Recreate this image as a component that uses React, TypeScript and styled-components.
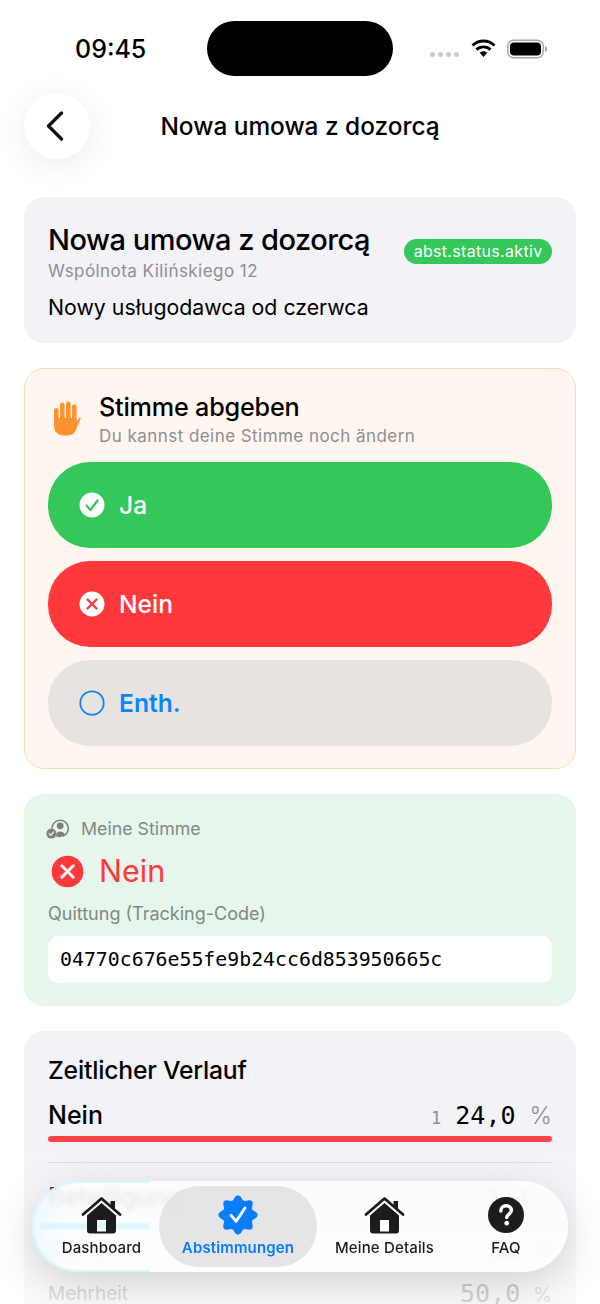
import styled, { createGlobalStyle } from 'styled-components';

const GlobalStyle = createGlobalStyle`
  html, body {
    margin: 0;
    padding: 0;
    background: #fff;
  }
  body {
    font-family: Inter, "Noto Sans", sans-serif;
    color: #000;
  }
  * {
    box-sizing: border-box;
  }
`;

const Screen = styled.div`
  position: relative;
  width: 600px;
  height: 1304px;
  overflow: hidden;
  background: #fff;
`;

const StatusBar = styled.div`
  height: 93px;
  padding: 21px 0 0 75px;
  display: flex;
  align-items: flex-start;
`;

const Clock = styled.div`
  flex: none;
  width: 132px;
  padding-top: 13px;
  font-size: 25px;
  line-height: 30px;
  font-weight: 500;
`;

const Island = styled.div`
  flex: none;
  width: 186px;
  height: 55px;
  border-radius: 28px;
  background: #000;
`;

const StatusIcons = styled.div`
  flex: none;
  margin-left: 37px;
  padding-top: 18px;
  display: flex;
  align-items: center;
  gap: 10px;
`;

const Dots = styled.div`
  display: flex;
  gap: 3px;
  margin-top: 11px;
  margin-right: 1px;
`;

const Dot = styled.span`
  width: 5px;
  height: 5px;
  border-radius: 50%;
  background: #ccc;
`;

const Nav = styled.div`
  position: relative;
  height: 104px;
  padding: 0 24px;
  display: flex;
  align-items: flex-start;
`;

const BackButton = styled.div`
  flex: none;
  width: 66px;
  height: 66px;
  padding-right: 5px;
  border-radius: 50%;
  background: #fff;
  display: flex;
  align-items: center;
  justify-content: center;
  box-shadow: 0 6px 34px rgba(0, 0, 0, 0.08);
`;

const NavTitle = styled.div`
  flex: 1;
  margin-left: -66px;
  text-align: center;
  font-size: 24.4px;
  line-height: 66px;
  font-weight: 500;
  white-space: nowrap;
`;

const Content = styled.div`
  padding: 0 24px;
  display: flex;
  flex-direction: column;
  gap: 25px;
`;

const Card = styled.section<{ $tone?: 'gray' | 'green' }>`
  border-radius: 20px;
  background: ${(props) => (props.$tone === 'green' ? '#e6f6ea' : '#f2f2f7')};
  padding: 24px;
`;

const SummaryCard = styled(Card)`
  height: 146px;
  padding-top: 25px;
`;

const SummaryTop = styled.div`
  display: flex;
  justify-content: space-between;
  align-items: flex-start;
`;

const BigTitle = styled.h1`
  margin: 0;
  font-size: 29px;
  line-height: 35px;
  font-weight: 550;
  letter-spacing: -0.5px;
  white-space: nowrap;
`;

const Sub = styled.div<{ $gap?: number }>`
  margin-top: ${(props) => props.$gap ?? 0}px;
  font-size: 17px;
  line-height: 20px;
  color: #8e8e93;
  letter-spacing: 0.45px;
  white-space: nowrap;
`;

const Description = styled.div`
  margin-top: 13px;
  font-size: 21.3px;
  line-height: 26px;
`;

const StatusBadge = styled.span`
  margin-top: 17px;
  height: 25px;
  padding: 0 9.500px;
  border-radius: 13px;
  background: #34c759;
  color: #fff;
  font-size: 16px;
  line-height: 25px;
  letter-spacing: 0.32px;
  white-space: nowrap;
`;

const VoteCard = styled.section`
  height: 401px;
  border-radius: 20px;
  border: 1.5px solid #fcd9b6;
  background: #fff6ef;
  padding: 23px 23px 0;
`;

const VoteHeader = styled.div`
  display: flex;
  align-items: center;
  gap: 18px;
  height: 53px;
  margin-bottom: 17px;
  padding-left: 5px;
`;

const VoteHeading = styled.div`
  font-size: 25.2px;
  line-height: 30px;
  font-weight: 550;
  letter-spacing: -0.2px;
`;

const VoteChoices = styled.div`
  display: flex;
  flex-direction: column;
  gap: 13px;
`;

const ChoiceButton = styled.div<{ $kind: 'yes' | 'no' | 'abstain' }>`
  height: 86px;
  border-radius: 42px;
  padding-left: 31px;
  display: flex;
  align-items: center;
  gap: 14px;
  font-size: 24.6px;
  font-weight: ${(props) => (props.$kind === 'abstain' ? 600 : 550)};
  background: ${(props) =>
    props.$kind === 'yes' ? '#34c759' : props.$kind === 'no' ? '#ff383c' : '#e7e3df'};
  color: ${(props) => (props.$kind === 'abstain' ? '#0a84ff' : '#fff')};
`;

const ReceiptCard = styled(Card)`
  height: 212px;
  padding-top: 23px;
`;

const MyVoteLabel = styled.div`
  display: flex;
  align-items: center;
  gap: 11px;
  margin-left: -2px;
  font-size: 17.8px;
  line-height: 24px;
  color: #7f8a84;
`;

const MyVote = styled.div`
  display: flex;
  align-items: center;
  gap: 15px;
  margin-top: 8px;
  padding-left: 3px;
  font-size: 30.5px;
  line-height: 44px;
  color: #ff383c;
`;

const ReceiptLabel = styled.div`
  margin-top: 9px;
  font-size: 18px;
  line-height: 24px;
  color: #7f8a84;
`;

const CodeBox = styled.div`
  margin-top: 10px;
  height: 47px;
  padding-left: 12px;
  border-radius: 10px;
  background: #fff;
  font-family: "DejaVu Sans Mono", "Liberation Mono", monospace;
  font-size: 19.85px;
  line-height: 47px;
`;

const TimelineCard = styled(Card)`
  height: 320px;
  padding-top: 22px;
`;

const TimelineTitle = styled.h2`
  margin: 0;
  font-size: 24.7px;
  line-height: 34px;
  font-weight: 550;
  letter-spacing: -0.2px;
`;

const ResultRow = styled.div<{ $gap?: number }>`
  display: flex;
  align-items: center;
  justify-content: space-between;
  margin-top: ${(props) => props.$gap ?? 0}px;
  height: 36px;
`;

const ResultName = styled.span<{ $small?: boolean }>`
  font-size: ${(props) => (props.$small ? 19 : 25)}px;
  font-weight: ${(props) => (props.$small ? 400 : 500)};
  color: ${(props) => (props.$small ? '#8e8e93' : '#000')};
`;

const Value = styled.span<{ $muted?: boolean }>`
  display: flex;
  align-items: baseline;
  font-family: "DejaVu Sans Mono", "Liberation Mono", monospace;
  font-size: 25px;
  color: ${(props) => (props.$muted ? '#6e6e73' : '#000')};
`;

const Count = styled.span`
  margin-right: 14px;
  font-size: 17px;
  color: #8e8e93;
`;

const Unit = styled.span<{ $small?: boolean }>`
  margin-left: ${(props) => (props.$small ? 13 : 14)}px;
  font-family: Inter, sans-serif;
  font-size: ${(props) => (props.$small ? 20 : 24)}px;
  font-weight: 300;
  color: #8e8e93;
`;

const Track = styled.div`
  height: 6px;
  margin-top: 3px;
  border-radius: 3px;
  background: #ff383c;
`;

const Divider = styled.div`
  height: 1px;
  margin-top: 20px;
  background: #d9d9de;
`;

const BottomFade = styled.div`
  position: absolute;
  left: 0;
  right: 0;
  bottom: 0;
  height: 180px;
  background: linear-gradient(rgba(255, 255, 255, 0), rgba(255, 255, 255, 0.72));
  pointer-events: none;
`;

const TabBar = styled.nav`
  position: absolute;
  left: 32px;
  top: 1181px;
  width: 536px;
  height: 91px;
  padding: 5px;
  border-radius: 46px;
  display: flex;
  overflow: hidden;
  background: rgba(253, 253, 254, 0.88);
  backdrop-filter: blur(2.5px);
  box-shadow: 0 12px 44px rgba(0, 0, 0, 0.16);
`;

/* refraction at the left end of the glass bar */
const GlassEdge = styled.div`
  position: absolute;
  left: 0;
  top: 0;
  width: 118px;
  height: 91px;
  border: 2px solid #d5f5ff;
  border-right: 0;
  border-radius: 46px 0 0 46px;
  background: linear-gradient(90deg, rgba(214, 246, 255, 0.45), rgba(255, 255, 255, 0) 25%);
`;

const GlassStreak = styled.div`
  position: absolute;
  left: 8px;
  top: 42px;
  width: 110px;
  height: 6px;
  background: #dbf6ff;
  filter: blur(1px);
`;

const TabItem = styled.div<{ $width: number; $inset?: number; $active?: boolean }>`
  position: relative;
  width: ${(props) => props.$width}px;
  height: 81px;
  flex: none;
  border-radius: 40px;
  padding: 10px 0 0 ${(props) => props.$inset ?? 0}px;
  display: flex;
  flex-direction: column;
  align-items: center;
  background: ${(props) => (props.$active ? 'rgba(225, 225, 228, 0.82)' : 'transparent')};
  color: ${(props) => (props.$active ? '#0a7dff' : '#1c1c1e')};
`;

const TabIcon = styled.div`
  height: 38px;
  display: flex;
  align-items: center;
  justify-content: center;
`;

const TabLabel = styled.span<{ $active?: boolean }>`
  margin-top: 4px;
  font-size: 15px;
  line-height: 20px;
  font-weight: ${(props) => (props.$active ? 600 : 500)};
  letter-spacing: 0.15px;
  white-space: nowrap;
`;

const Wifi = () => (
  <svg width="27" height="20" viewBox="0 0 27 20">
    <path
      fill="#000"
      d="M13.5 3.6c3.9 0 7.4 1.5 10 4l2-2.1C22.3 2.4 18.1.5 13.5.5S4.7 2.4 1.5 5.5l2 2.1c2.6-2.5 6.1-4 10-4z"
    />
    <path
      fill="#000"
      d="M13.5 9.3c2.3 0 4.4.9 6 2.4l2-2.1c-2.1-2-4.9-3.2-8-3.2s-5.9 1.2-8 3.2l2 2.1c1.6-1.5 3.7-2.4 6-2.4z"
    />
    <path fill="#000" d="M13.5 12.3c-1.5 0-2.8.6-3.8 1.5l3.8 4.3 3.8-4.3c-1-.9-2.3-1.5-3.800-1.500z" />
  </svg>
);

const Battery = () => (
  <svg width="41" height="20" viewBox="0 0 41 20">
    <rect x="0.75" y="1.25" width="35.5" height="17.5" rx="6" fill="none" stroke="#a8a8a8" strokeWidth="1.5" />
    <rect x="3" y="3.5" width="31" height="13" rx="4" fill="#000" />
    <path d="M38 7v6c1.3-.4 2.2-1.7 2.2-3S39.3 7.4 38 7z" fill="#a8a8a8" />
  </svg>
);

const Chevron = () => (
  <svg width="20" height="30" viewBox="0 0 20 30">
    <path d="M16.5 2 L3.5 15 L16.5 28" fill="none" stroke="#111" strokeWidth="3.3" strokeLinecap="round" strokeLinejoin="round" />
  </svg>
);

const RaisedHand = () => (
  <svg width="28" height="35" viewBox="0 0 28 35">
    <g fill="#ff9230">
      <rect x="1" y="7" width="4.6" height="18" rx="2.3" />
      <rect x="7" y="1.5" width="4.6" height="20" rx="2.3" />
      <rect x="13" y="0.5" width="4.6" height="20" rx="2.3" />
      <rect x="19" y="3.5" width="4.6" height="18" rx="2.3" />
      <path d="M1 17h22.6v4l2.1-3.6c.7-1.1 2-1.4 2-.4 0 .4-.1.8-.3 1.2l-4.2 10.1C21.7 32.6 18.9 34.5 14.5 34.5H11C5 34.5 1 30.5 1 25z" />
    </g>
  </svg>
);

const CheckDisc = () => (
  <svg width="26" height="26" viewBox="0 0 26 26">
    <circle cx="13" cy="13" r="12.5" fill="#fff" />
    <path d="M7.5 13.5 L11.5 18 L18.5 8.5" fill="none" stroke="#34c759" strokeWidth="2.2" strokeLinecap="round" strokeLinejoin="round" />
  </svg>
);

const CrossDisc = ({ size, bg, fg }: { size: number; bg: string; fg: string }) => (
  <svg width={size} height={size} viewBox="0 0 26 26">
    <circle cx="13" cy="13" r="12.5" fill={bg} />
    <path d="M8.5 8.5 L17.5 17.5 M17.5 8.5 L8.5 17.5" fill="none" stroke={fg} strokeWidth="2.4" strokeLinecap="round" />
  </svg>
);

const EmptyDisc = () => (
  <svg width="26" height="26" viewBox="0 0 26 26">
    <circle cx="13" cy="13" r="11.7" fill="none" stroke="#0a84ff" strokeWidth="1.8" />
  </svg>
);

const PersonCheck = () => (
  <svg width="24" height="20" viewBox="0 0 24 20">
    <g fill="#7a827d">
      <path d="M14 0.5a9 9 0 0 1 3 17.5l-.6-1.5a7.4 7.4 0 1 0-9.7-7.3l-1.6.2A9 9 0 0 1 14 .5z" />
      <circle cx="14.2" cy="6.8" r="3.4" />
      <path d="M9.8 17.6c.4-.8.7-1.8.5-3 1-1.5 2.4-2.1 3.9-2.1 2 0 3.5.9 4.5 2.5-1.1 1.6-2.7 2.8-4.6 3.2z" />
      <circle cx="5.4" cy="14.6" r="5" />
    </g>
    <path d="M3.2 14.6 L4.9 16.4 L7.7 12.9" fill="none" stroke="#e6f6ea" strokeWidth="1.3" strokeLinecap="round" strokeLinejoin="round" />
  </svg>
);

const House = () => (
  <svg width="41" height="38" viewBox="0 0 41 38">
    <path d="M2 18.5 L20.5 2.5 L39 18.5" fill="none" stroke="#1c1c1e" strokeWidth="2.8" strokeLinecap="round" strokeLinejoin="round" />
    <path d="M29.5 5h4.5v9l-4.5-3.900z" fill="#1c1c1e" />
    <path
      fill="#1c1c1e"
      fillRule="evenodd"
      d="M20.5 7 L35 19.5 V34.5 a3 3 0 0 1-3 3 H9 a3 3 0 0 1-3-3 V19.5z M16 24 V35.5 H25 V24z"
    />
  </svg>
);

// eight soft lobes, top lobe upright
const sealPath = Array.from({ length: 96 }, (_, i) => {
  const angle = (i / 96) * Math.PI * 2 - Math.PI / 2;
  const radius = 10.5 + 1.3 * Math.cos(8 * (angle + Math.PI / 2));
  return `${(12 + radius * Math.cos(angle)).toFixed(2)} ${(12 + radius * Math.sin(angle)).toFixed(2)}`;
}).join(' L');

const Seal = () => (
  <svg width="40" height="40" viewBox="0 0 24 24">
    <path fill="#0a7dff" d={`M${sealPath}Z`} />
    <path d="M7.8 12.2 L10.9 15.8 L16.2 7.8" fill="none" stroke="#fff" strokeWidth="1.7" strokeLinecap="round" strokeLinejoin="round" />
  </svg>
);

const Question = () => (
  <svg width="36" height="36" viewBox="0 0 35 35">
    <circle cx="17.5" cy="17.5" r="17.5" fill="#1c1c1e" />
    <path d="M12.5 13.5c0-3 2.2-5 5.2-5s5 1.8 5 4.4c0 3.6-4.5 3.8-4.5 7.1" fill="none" stroke="#fff" strokeWidth="3.4" strokeLinecap="round" />
    <circle cx="18.2" cy="25.5" r="2.3" fill="#fff" />
  </svg>
);

const tabs = [
  { label: 'Dashboard', width: 122, inset: 7, icon: <House /> },
  { label: 'Abstimmungen', width: 158, icon: <Seal />, active: true },
  { label: 'Meine Details', width: 135, icon: <House /> },
  { label: 'FAQ', width: 108, icon: <Question /> },
];

const App = () => {
  return (
    <Screen>
      <GlobalStyle />
      <StatusBar>
        <Clock>09:45</Clock>
        <Island />
        <StatusIcons>
          <Dots>
            <Dot />
            <Dot />
            <Dot />
            <Dot />
          </Dots>
          <Wifi />
          <Battery />
        </StatusIcons>
      </StatusBar>
      <Nav>
        <BackButton>
          <Chevron />
        </BackButton>
        <NavTitle>Nowa umowa z dozorcą</NavTitle>
      </Nav>
      <Content>
        <SummaryCard>
          <SummaryTop>
            <div>
              <BigTitle>Nowa umowa z dozorcą</BigTitle>
              <Sub $gap={4}>Wspólnota Kilińskiego 12</Sub>
            </div>
            <StatusBadge>abst.status.aktiv</StatusBadge>
          </SummaryTop>
          <Description>Nowy usługodawca od czerwca</Description>
        </SummaryCard>
        <VoteCard>
          <VoteHeader>
            <RaisedHand />
            <div>
              <VoteHeading>Stimme abgeben</VoteHeading>
              <Sub $gap={4}>Du kannst deine Stimme noch ändern</Sub>
            </div>
          </VoteHeader>
          <VoteChoices>
            <ChoiceButton $kind="yes">
              <CheckDisc />
              Ja
            </ChoiceButton>
            <ChoiceButton $kind="no">
              <CrossDisc size={26} bg="#fff" fg="#ff383c" />
              Nein
            </ChoiceButton>
            <ChoiceButton $kind="abstain">
              <EmptyDisc />
              Enth.
            </ChoiceButton>
          </VoteChoices>
        </VoteCard>
        <ReceiptCard $tone="green">
          <MyVoteLabel>
            <PersonCheck />
            Meine Stimme
          </MyVoteLabel>
          <MyVote>
            <CrossDisc size={33} bg="#ff383c" fg="#e6f6ea" />
            Nein
          </MyVote>
          <ReceiptLabel>Quittung (Tracking-Code)</ReceiptLabel>
          <CodeBox>04770c676e55fe9b24cc6d853950665c</CodeBox>
        </ReceiptCard>
        <TimelineCard>
          <TimelineTitle>Zeitlicher Verlauf</TimelineTitle>
          <ResultRow $gap={10}>
            <ResultName>Nein</ResultName>
            <Value>
              <Count>1</Count>
              24,0
              <Unit>%</Unit>
            </Value>
          </ResultRow>
          <Track />
          <Divider />
          <ResultRow $gap={16}>
            <ResultName>Beteiligung</ResultName>
            <Value $muted>
              1 )
              <Unit>.</Unit>
            </Value>
          </ResultRow>
          <ResultRow $gap={17}>
            <ResultName $small>Quorum</ResultName>
            <Value $muted>
              60
              <Unit $small>%</Unit>
            </Value>
          </ResultRow>
          <ResultRow $gap={7}>
            <ResultName $small>Mehrheit</ResultName>
            <Value $muted>
              50,0
              <Unit $small>%</Unit>
            </Value>
          </ResultRow>
        </TimelineCard>
      </Content>
      <BottomFade />
      <TabBar>
        <GlassEdge />
        <GlassStreak />
        {tabs.map((tab) => (
          <TabItem key={tab.label} $width={tab.width} $inset={tab.inset} $active={tab.active}>
            <TabIcon>{tab.icon}</TabIcon>
            <TabLabel $active={tab.active}>{tab.label}</TabLabel>
          </TabItem>
        ))}
      </TabBar>
    </Screen>
  );
};

export default App;
